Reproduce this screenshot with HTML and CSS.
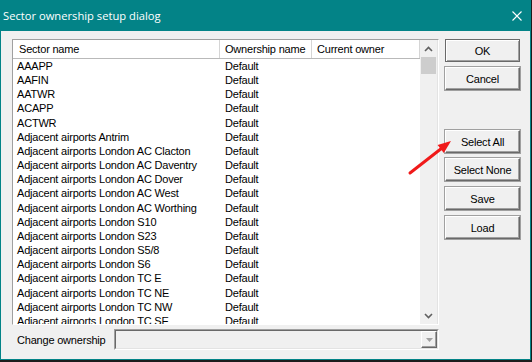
FILE: index.html
```html
<!DOCTYPE html>
<html lang="en">
<head>
    <meta charset="UTF-8">
    <title>Sector ownership setup dialog</title>
    <link rel="stylesheet" href="styles.css">
</head>
<body>
    <div class="window">
        <div class="titlebar">
            <span class="title">Sector ownership setup dialog</span>
            <svg class="close" width="10" height="10" viewBox="0 0 10 10">
                <path d="M0.5 0.5 L9.5 9.5 M9.5 0.5 L0.5 9.5" stroke="#fff" stroke-width="1.1" fill="none"/>
            </svg>
        </div>
        <div class="client">
            <div class="main">
                <div class="listview">
                    <div class="lv-frame">
                        <div class="lv-body">
                            <div class="lv-header">
                                <div class="hcol col-name">Sector name</div>
                                <div class="hcol col-own">Ownership name</div>
                                <div class="hcol col-cur">Current owner</div>
                            </div>
                            <div class="lv-rows">
                                <div class="row"><span class="c-name">AAAPP</span><span class="c-own">Default</span></div>
                                <div class="row"><span class="c-name">AAFIN</span><span class="c-own">Default</span></div>
                                <div class="row"><span class="c-name">AATWR</span><span class="c-own">Default</span></div>
                                <div class="row"><span class="c-name">ACAPP</span><span class="c-own">Default</span></div>
                                <div class="row"><span class="c-name">ACTWR</span><span class="c-own">Default</span></div>
                                <div class="row"><span class="c-name">Adjacent airports Antrim</span><span class="c-own">Default</span></div>
                                <div class="row"><span class="c-name">Adjacent airports London AC Clacton</span><span class="c-own">Default</span></div>
                                <div class="row"><span class="c-name">Adjacent airports London AC Daventry</span><span class="c-own">Default</span></div>
                                <div class="row"><span class="c-name">Adjacent airports London AC Dover</span><span class="c-own">Default</span></div>
                                <div class="row"><span class="c-name">Adjacent airports London AC West</span><span class="c-own">Default</span></div>
                                <div class="row"><span class="c-name">Adjacent airports London AC Worthing</span><span class="c-own">Default</span></div>
                                <div class="row"><span class="c-name">Adjacent airports London S10</span><span class="c-own">Default</span></div>
                                <div class="row"><span class="c-name">Adjacent airports London S23</span><span class="c-own">Default</span></div>
                                <div class="row"><span class="c-name">Adjacent airports London S5/8</span><span class="c-own">Default</span></div>
                                <div class="row"><span class="c-name">Adjacent airports London S6</span><span class="c-own">Default</span></div>
                                <div class="row"><span class="c-name">Adjacent airports London TC E</span><span class="c-own">Default</span></div>
                                <div class="row"><span class="c-name">Adjacent airports London TC NE</span><span class="c-own">Default</span></div>
                                <div class="row"><span class="c-name">Adjacent airports London TC NW</span><span class="c-own">Default</span></div>
                                <div class="row"><span class="c-name">Adjacent airports London TC SE</span><span class="c-own">Default</span></div>
                            </div>
                        </div>
                        <div class="scrollbar">
                            <div class="sb-arrow">
                                <svg width="9" height="6" viewBox="0 0 9 6"><path d="M1 5 L4.5 1.5 L8 5" stroke="#606060" stroke-width="1.6" fill="none"/></svg>
                            </div>
                            <div class="sb-thumb"></div>
                            <div class="sb-track"></div>
                            <div class="sb-arrow">
                                <svg width="9" height="6" viewBox="0 0 9 6"><path d="M1 1 L4.5 4.5 L8 1" stroke="#606060" stroke-width="1.6" fill="none"/></svg>
                            </div>
                        </div>
                    </div>
                </div>
                <div class="change-row">
                    <span class="change-label">Change ownership</span>
                    <div class="combo">
                        <div class="combo-inner">
                            <div class="combo-btn">
                                <svg width="7" height="4" viewBox="0 0 7 4"><path d="M0 0 L7 0 L3.5 4 Z" fill="#a0a0a0"/></svg>
                            </div>
                        </div>
                    </div>
                </div>
            </div>
            <div class="buttons">
                <button class="btn btn-default">OK</button>
                <button class="btn btn-cancel">Cancel</button>
                <button class="btn btn-select-all">Select All</button>
                <button class="btn btn-select-none">Select None</button>
                <button class="btn btn-save">Save</button>
                <button class="btn btn-load">Load</button>
            </div>
        </div>
        <svg class="annotation" width="531" height="360" viewBox="0 0 531 360">
            <line x1="410" y1="173" x2="442" y2="148" stroke="#f01a1a" stroke-width="3" stroke-linecap="round"/>
            <polygon points="451,141 437.6,145 443.8,153" fill="#f01a1a"/>
        </svg>
    </div>
</body>
</html>
```

FILE: styles.css
```css
body {
    margin: 0;
    background: #1c1c1c;
    font-family: "Liberation Sans", Arial, sans-serif;
    font-size: 11px;
    letter-spacing: -0.2px;
    color: #000;
}
.window {
    position: relative;
    width: 531px;
    height: 360px;
    box-sizing: border-box;
    background: #038387;
    padding: 0 1px 1px 1px;
    display: flex;
    flex-direction: column;
}
.titlebar {
    height: 31px;
    display: flex;
    align-items: center;
    justify-content: space-between;
    padding: 0 8px 0 2px;
    color: #fff;
}
.title {
    font-family: "Open Sans", sans-serif;
    font-size: 11.2px;
    letter-spacing: 0;
}
.client {
    flex: 1;
    background: #f0f0f0;
    display: flex;
    gap: 6px;
    padding: 8px 10px 0 11px;
}
.main {
    width: 427px;
    display: flex;
    flex-direction: column;
    gap: 4px;
}
.listview {
    height: 286px;
    box-sizing: border-box;
    border: 1px solid;
    border-color: #a0a0a0 #fff #fff #a0a0a0;
    background: #fff;
}
.lv-frame {
    height: 100%;
    box-sizing: border-box;
    border-right: 1px solid #e3e3e3;
    display: flex;
}
.lv-body {
    width: 407px;
    overflow: hidden;
}
.lv-header {
    display: flex;
    height: 18px;
    border-bottom: 1px solid #b9b9b9;
}
.hcol {
    box-sizing: border-box;
    border-right: 1px solid #d5d5d5;
    line-height: 19px;
    padding-left: 5px;
}
.col-name {
    width: 207px;
    padding-left: 6px;
}
.col-own {
    width: 92px;
}
.col-cur {
    width: 108px;
}
.row {
    display: flex;
    height: 14.17px;
    line-height: 14.17px;
    white-space: nowrap;
}
.c-name {
    width: 207px;
    padding-left: 4px;
    box-sizing: border-box;
}
.c-own {
    padding-left: 5px;
}
.scrollbar {
    width: 17px;
    background: #f0f0f0;
    display: flex;
    flex-direction: column;
}
.sb-arrow {
    height: 17px;
    display: flex;
    align-items: center;
    justify-content: center;
}
.sb-thumb {
    height: 17px;
    margin: 0 1px;
    background: #cdcdcd;
}
.sb-track {
    flex: 1;
}
.change-row {
    display: flex;
    align-items: center;
}
.change-label {
    width: 102px;
    padding-left: 5px;
    box-sizing: border-box;
}
.combo {
    flex: 1;
    height: 21px;
    box-sizing: border-box;
    border: 1px solid;
    border-color: #a0a0a0 #fff #fff #a0a0a0;
}
.combo-inner {
    height: 100%;
    box-sizing: border-box;
    border: 1px solid;
    border-color: #696969 #e3e3e3 #e3e3e3 #696969;
    background: #f0f0f0;
    display: flex;
    justify-content: flex-end;
}
.combo-btn {
    width: 16px;
    box-sizing: border-box;
    border: 1px solid;
    border-color: #fff #696969 #696969 #fff;
    display: flex;
    align-items: center;
    justify-content: center;
    box-shadow: inset -1px -1px 0 #a0a0a0;
}
.buttons {
    display: flex;
    flex-direction: column;
    width: 75px;
}
.btn {
    height: 23px;
    width: 75px;
    box-sizing: border-box;
    margin: 0 0 5px 0;
    padding: 0;
    font-family: "Liberation Sans", Arial, sans-serif;
    font-size: 11px;
    letter-spacing: -0.2px;
    color: #000;
    background: #f0f0f0;
    border: 1px solid;
    border-color: #fff #696969 #696969 #fff;
    box-shadow: inset -1px -1px 0 #a0a0a0;
    outline: 1px solid #a0a0a0;
    outline-offset: 0;
}
.btn-default {
    border-color: #696969;
    box-shadow: inset 1px 1px 0 #fff, inset -1px -1px 0 #a0a0a0;
    outline: none;
}
.btn-select-all {
    margin-top: 35px;
}
.btn-save {
    margin-top: 1px;
}
.btn-load {
    margin-top: 1px;
}
.annotation {
    position: absolute;
    left: 0;
    top: 0;
    pointer-events: none;
}
```
